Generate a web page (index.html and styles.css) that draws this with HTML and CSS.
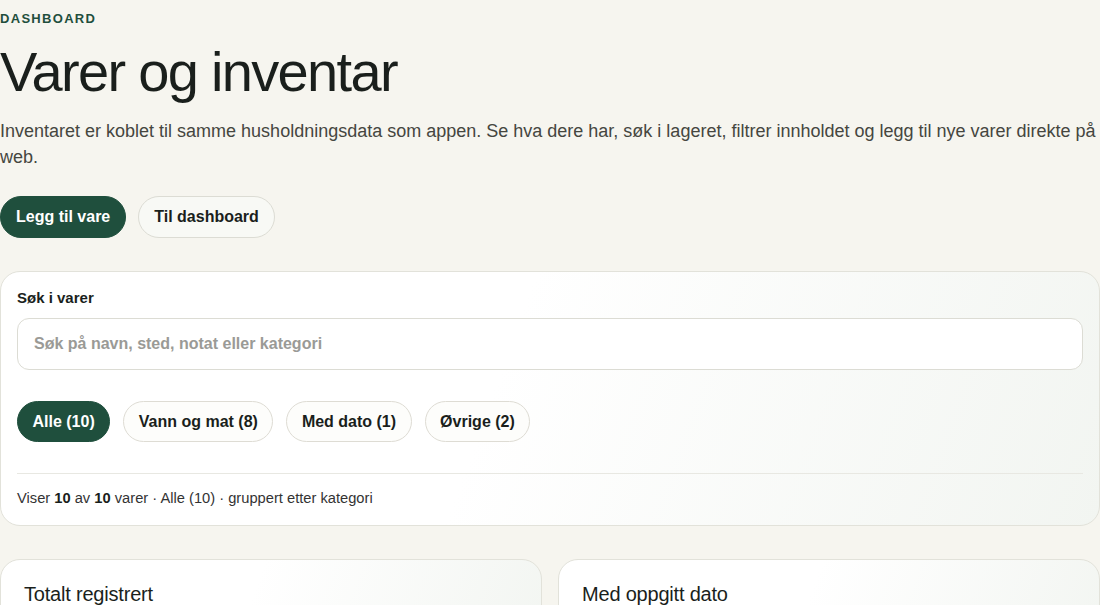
FILE: index.html
```html
<!DOCTYPE html>
<html lang="no">
<head>
    <title>Varer og inventar</title>
    <meta charset="utf-8">
    <meta name="viewport" content="width=device-width, initial-scale=1.0">
    <link rel="stylesheet" href="styles.css">
</head>
<body>
    <div class="page">
        <div class="eyebrow">Dashboard</div>
        <h1>Varer og inventar</h1>
        <p class="intro">Inventaret er koblet til samme husholdningsdata som appen. Se hva dere har, søk i lageret, filtrer innholdet og legg til nye varer direkte på web.</p>

        <div class="actions">
            <button class="btn btn-primary">Legg til vare</button>
            <button class="btn btn-ghost">Til dashboard</button>
        </div>

        <div class="card search-card">
            <label class="field-label" for="search">Søk i varer</label>
            <input type="text" id="search" placeholder="Søk på navn, sted, notat eller kategori">

            <div class="chips">
                <button class="chip active">Alle (10)</button>
                <button class="chip">Vann og mat (8)</button>
                <button class="chip">Med dato (1)</button>
                <button class="chip">Øvrige (2)</button>
            </div>

            <div class="summary">
                Viser <strong>10</strong> av <strong>10</strong> varer · Alle (10) · gruppert etter kategori
            </div>
        </div>

        <div class="stats">
            <div class="card stat">
                <div class="stat-title">Totalt registrert</div>
                <div class="stat-value">10</div>
            </div>
            <div class="card stat">
                <div class="stat-title">Med oppgitt dato</div>
                <div class="stat-value">1</div>
            </div>
        </div>
    </div>
</body>
</html>
```

FILE: styles.css
```css
body {
    font-family: "Liberation Sans", Arial, sans-serif;
    margin: 0;
    background-color: #f6f5ef;
    color: #1a1f1c;
}

.page {
    padding: 11px 0 40px;
}

.eyebrow {
    font-size: 13px;
    line-height: 16px;
    font-weight: bold;
    letter-spacing: 0.1em;
    text-transform: uppercase;
    color: #1f4f3d;
}

h1 {
    margin: 15px 0 0;
    font-size: 56px;
    line-height: 59px;
    font-weight: normal;
    letter-spacing: -0.03em;
    color: #1a1f1c;
}

.intro {
    margin: 17px 0 0;
    font-size: 18px;
    line-height: 26px;
    color: #45463f;
}

.actions {
    display: flex;
    gap: 12px;
    margin-top: 26px;
}

.btn {
    height: 42px;
    padding: 0 15px;
    border-radius: 999px;
    font-family: inherit;
    font-size: 16px;
    font-weight: bold;
    cursor: pointer;
}

.btn-primary {
    background: #1f4f3d;
    color: white;
    border: 1px solid #1f4f3d;
}

.btn-ghost {
    background: #f8f9f5;
    color: #1a1f1c;
    border: 1px solid #dcdcd4;
}

.card {
    background: linear-gradient(110deg, #ffffff 45%, #f2f5f1 100%);
    border: 1px solid #e2e2da;
    border-radius: 20px;
}

.search-card {
    margin-top: 33px;
    padding: 16px 16px 17px;
}

.field-label {
    display: block;
    font-size: 15px;
    line-height: 20px;
    font-weight: bold;
}

input {
    display: block;
    box-sizing: border-box;
    width: 100%;
    height: 52px;
    margin-top: 10px;
    padding: 0 16px;
    border: 1px solid #dcdcd4;
    border-radius: 12px;
    background: white;
    font-family: inherit;
    font-size: 16px;
    font-weight: bold;
}

input::placeholder {
    color: #9a9a96;
}

.chips {
    display: flex;
    gap: 13px;
    margin-top: 31px;
    padding-bottom: 31px;
    border-bottom: 1px solid #e8e8e2;
}

.chip {
    height: 41px;
    padding: 0 14.5px;
    border: 1px solid #dedcd4;
    border-radius: 999px;
    background: #fdfdfb;
    color: #1a1f1c;
    font-family: inherit;
    font-size: 16px;
    font-weight: bold;
    cursor: pointer;
}

.chip.active {
    background: #1f4f3d;
    border-color: #1f4f3d;
    color: white;
}

.summary {
    padding-top: 14px;
    font-size: 14.7px;
    line-height: 20px;
    color: #333;
}

.summary strong {
    color: #1a1f1c;
}

.stats {
    display: grid;
    grid-template-columns: 1fr 1fr;
    gap: 16px;
    margin-top: 33px;
}

.stat {
    padding: 20px 23px;
}

.stat-title {
    font-size: 20px;
    line-height: 28px;
    letter-spacing: -0.01em;
}

.stat-value {
    margin-top: 14px;
    font-size: 40px;
    font-weight: bold;
    color: #1f4f3d;
}
```
